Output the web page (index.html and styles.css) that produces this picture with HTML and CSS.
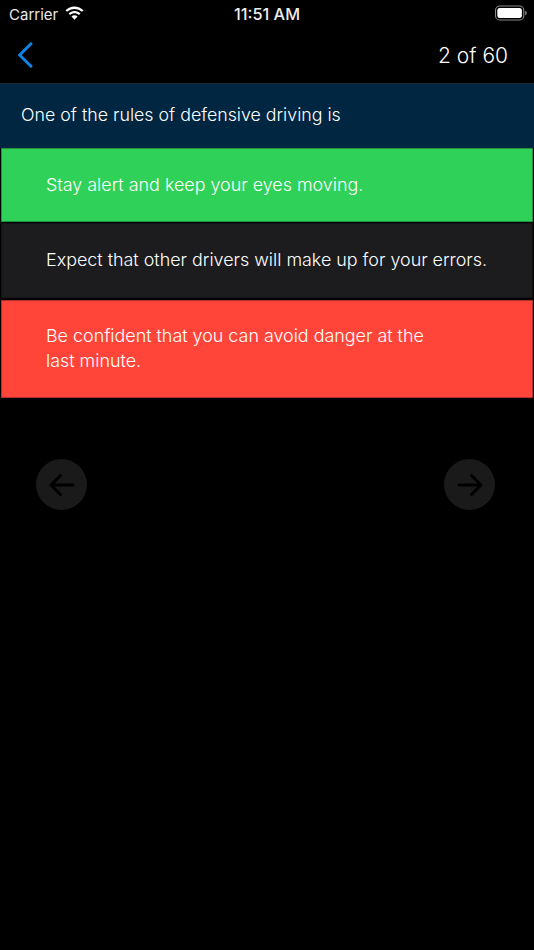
FILE: index.html
```html
<!DOCTYPE html>
<html lang="en">
<head>
<meta charset="utf-8">
<title>Quiz</title>
<link rel="stylesheet" href="styles.css">
</head>
<body>
<div class="status">
  <div class="status-left">
    <span>Carrier</span>
    <svg class="wifi" width="19" height="14" viewBox="1 0 18 13"><path d="M10 2.600c2.700 0 5.200 1 7.100 2.800l1.400-1.500C16.200 1.700 13.200.4 10 .4S3.800 1.700 1.500 3.900l1.400 1.500C4.800 3.600 7.300 2.600 10 2.600z" fill="#fff"/><path d="M10 6.700c1.600 0 3.100.6 4.200 1.700l1.500-1.500C14.200 5.400 12.200 4.500 10 4.500S5.800 5.400 4.300 6.900l1.500 1.500C6.900 7.300 8.400 6.700 10 6.700z" fill="#fff"/><path d="M10 8.600c-1.100 0-2.100.4-2.900 1.100L10 12.800l2.900-3.100C12.100 9 11.100 8.600 10 8.600z" fill="#fff"/></svg>
  </div>
  <span class="time">11:51 AM</span>
  <div class="status-right">
    <svg class="battery" width="32" height="16" viewBox="0 0 30 15"><rect x=".5" y="1" width="26.500" height="13" rx="3.800" fill="none" stroke="#8a8a8a"/><rect x="2.200" y="2.700" width="23" height="9.600" rx="2.300" fill="#fff"/><path d="M28.300 5.300c.9.300 1.400 1.100 1.400 2.200s-.5 1.900-1.400 2.200z" fill="#8a8a8a"/></svg>
  </div>
</div>
<header class="nav">
  <svg class="back" width="16" height="26" viewBox="0 0 16 26"><path d="M14 1.800 2.600 13 14 24.200" fill="none" stroke="#0a84e8" stroke-width="3" stroke-linecap="round" stroke-linejoin="round"/></svg>
  <span class="count">2 of 60</span>
</header>
<main>
  <div class="question">One of the rules of defensive driving is</div>
  <div class="options">
    <div class="option option-correct">Stay alert and keep your eyes moving.</div>
    <div class="option option-neutral">Expect that other drivers will make up for your errors.</div>
    <div class="option option-wrong">Be confident that you can avoid danger at the<br>last minute.</div>
  </div>
  <div class="arrows">
    <div class="arrow"><svg width="30" height="26" viewBox="0 0 30 26"><path d="M26 13H4M13.500 3.500 4 13l9.500 9.500" fill="none" stroke="#000" stroke-width="3" stroke-linecap="round" stroke-linejoin="round"/></svg></div>
    <div class="arrow"><svg width="30" height="26" viewBox="0 0 30 26"><path d="M4 13h22M16.500 3.500 26 13l-9.500 9.500" fill="none" stroke="#000" stroke-width="3" stroke-linecap="round" stroke-linejoin="round"/></svg></div>
  </div>
</main>
</body>
</html>
```
FILE: styles.css
```css
* { box-sizing: border-box; }
html, body { margin: 0; height: 100%; }
body {
  width: 534px;
  height: 950px;
  overflow: hidden;
  background: #000;
  color: #fff;
  font-family: Inter, "Liberation Sans", sans-serif;
}
.status {
  height: 28px;
  padding: 0 9px;
  display: grid;
  grid-template-columns: 1fr auto 1fr;
  align-items: center;
}
.status-left {
  display: flex;
  align-items: center;
  gap: 7px;
  font-size: 15px;
  color: #e8e8e8;
}
.status-right {
  display: flex;
  justify-content: flex-end;
}
.wifi { margin-top: -2px; }
.time { font-size: 16.300px; font-weight: 500; color: #eee; }
.battery { margin: -2px -2px 0 0; }
.nav {
  height: 55px;
  padding: 0 26px 0 17px;
  display: flex;
  align-items: center;
  justify-content: space-between;
}
.back { margin-top: -2px; }
.count { font-size: 21px; font-weight: 350; }
.question {
  height: 65px;
  padding: 0 21px 3px;
  display: flex;
  align-items: center;
  background: #012641;
  border-top: 1px solid #1c2a34;
  font-size: 17.800px;
  font-weight: 350;
}
.options {
  display: flex;
  flex-direction: column;
  gap: 1px;
}
.option {
  padding: 0 44px 2px;
  margin: 0 1px;
  display: flex;
  align-items: center;
  font-size: 17.900px;
  font-weight: 350;
  line-height: 25px;
  border: 1px solid rgba(0, 0, 0, .3);
}
.option-correct { height: 74px; background: #30d158; }
.option-neutral { height: 75px; background: #1c1c1e; }
.option-wrong { height: 98px; margin-top: 1px; background: #ff453a; }
.arrows {
  margin-top: 61px;
  padding: 0 39px 0 36px;
  display: flex;
  justify-content: space-between;
}
.arrow {
  width: 51px;
  height: 51px;
  border-radius: 50%;
  background: #1a1a1a;
  display: flex;
  align-items: center;
  justify-content: center;
}
```
